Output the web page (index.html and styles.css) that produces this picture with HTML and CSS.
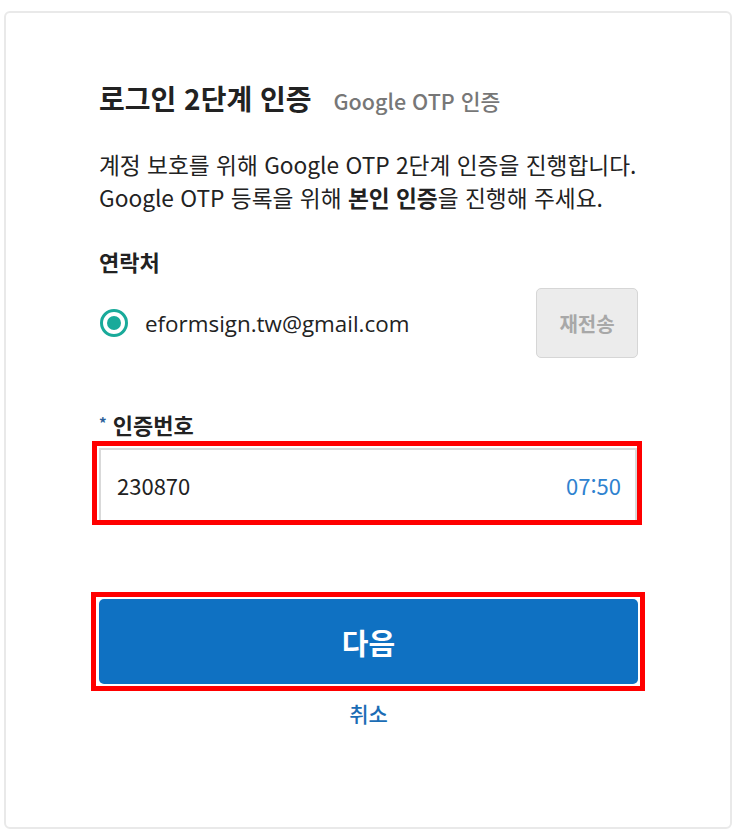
FILE: index.html
```html
<!DOCTYPE html>
<html lang="ko">
<head>
<meta charset="utf-8">
<title>로그인 2단계 인증</title>
<link rel="stylesheet" href="styles.css">
</head>
<body>
<div class="card">
  <div class="content">
    <h1 class="title">로그인 2단계 인증<span class="subtitle">Google OTP 인증</span></h1>
    <p class="desc">계정 보호를 위해 Google OTP 2단계 인증을 진행합니다.<br>Google OTP 등록을 위해 <b>본인 인증</b>을 진행해 주세요.</p>
    <div class="label label-contact">연락처</div>
    <div class="contact-row">
      <div class="radio"><span class="dot"></span></div>
      <span class="email">eformsign.tw@gmail.com</span>
      <button class="resend">재전송</button>
    </div>
    <div class="label label-code"><span class="star">*</span> 인증번호</div>
    <div class="field">
      <span class="code">230870</span>
      <span class="timer">07:50</span>
      <span class="mark mark-field"></span>
    </div>
    <div class="next-wrap">
      <button class="next">다음</button>
      <span class="mark mark-next"></span>
    </div>
    <div class="cancel">취소</div>
  </div>
</div>
</body>
</html>
```
FILE: styles.css
```css
* { box-sizing: border-box; }
html, body { margin: 0; padding: 0; background: #fff; }
body {
  font-family: "Noto Sans CJK KR", "Noto Sans", sans-serif;
  color: #222;
}
.card {
  margin: 11px 0 0 4px;
  width: 728px;
  height: 818px;
  border: 2px solid #e9e9e9;
  border-radius: 6px;
  background: #fff;
}
.content {
  padding: 68px 92px 0 93px;
  display: flex;
  flex-direction: column;
}
.title {
  margin: 0;
  font-size: 28px;
  line-height: 34px;
  font-weight: 700;
  color: #222;
  display: flex;
  align-items: baseline;
  white-space: nowrap;
}
.subtitle {
  margin-left: 22px;
  font-size: 21.5px;
  font-weight: 500;
  color: #777;
}
.desc {
  margin: 30px 0 0;
  font-size: 22.7px;
  line-height: 33px;
  color: #222;
  white-space: nowrap;
}
.desc b { font-weight: 700; }
.label {
  font-size: 22px;
  line-height: 26px;
  font-weight: 700;
  color: #222;
}
.label-contact { margin-top: 34px; }
.contact-row {
  margin-top: 14px;
  height: 70px;
  display: flex;
  align-items: center;
}
.radio {
  width: 28px;
  height: 28px;
  margin-left: 1px;
  border: 3px solid #19aa9a;
  border-radius: 50%;
  display: flex;
  align-items: center;
  justify-content: center;
}
.dot {
  width: 14px;
  height: 14px;
  border-radius: 50%;
  background: #19aa9a;
}
.email {
  margin-left: 17px;
  font-family: "Open Sans", "Noto Sans CJK KR", sans-serif;
  font-size: 22.4px;
  color: #222;
  flex: 1;
}
.resend {
  width: 102px;
  height: 70px;
  border: 1px solid #d6d6d6;
  border-radius: 5px;
  background: #ececec;
  color: #a8a8a8;
  font-family: inherit;
  font-size: 20px;
  font-weight: 700;
}
.label-code { margin-top: 52px; }
.star { color: #2b5f9a; font-size: 15px; vertical-align: 5px; }
.field {
  position: relative;
  margin-top: 11px;
  width: 538px;
  height: 74px;
  border: 2px solid #d9d9d9;
  display: flex;
  align-items: center;
  justify-content: space-between;
  padding: 0 14px 0 16px;
  font-size: 22px;
}
.code { color: #222; }
.timer { color: #2f82cf; }
.mark {
  position: absolute;
  border: 5px solid #ff0000;
  pointer-events: none;
}
.mark-field { left: -9px; right: -7px; top: -9px; bottom: -5px; }
.next-wrap {
  position: relative;
  margin-top: 77px;
  width: 539px;
  height: 85px;
}
.next {
  width: 100%;
  height: 100%;
  border: none;
  border-radius: 5px;
  background: #0f71c2;
  color: #fff;
  font-family: inherit;
  font-size: 29px;
  font-weight: 700;
}
.mark-next { left: -8px; right: -7px; top: -7px; bottom: -7px; }
.cancel {
  margin-top: 16px;
  text-align: center;
  font-size: 21px;
  line-height: 26px;
  font-weight: 500;
  color: #1b6db5;
}
```
